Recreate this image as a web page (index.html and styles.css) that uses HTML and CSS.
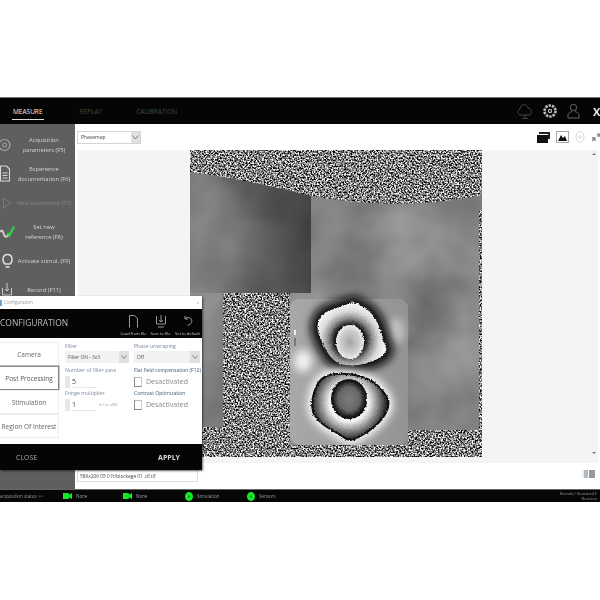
FILE: index.html
```html
<!DOCTYPE html>
<html>
<head>
    <title>Measure</title>
    <link rel="stylesheet" href="styles.css">
</head>
<body>
<div id="app">
    <div id="topbar">
        <div class="tab active">MEASURE</div>
        <div class="tab replay">REPLAY</div>
        <div class="tab calib">CALIBRATION</div>
        <div class="top-icons">
            <svg width="18" height="18" viewBox="0 0 18 18" fill="none" stroke="#444" stroke-width="1"><path d="M5 13 C1 13 1 8 4 7 C4 2 11 1 12 6 C16 6 17 13 13 13 Z"/><path d="M9 13 V16 M6 16.5 H12"/></svg>
            <svg width="16" height="16" viewBox="0 0 16 16" fill="none" stroke="#bbb"><circle cx="8" cy="8" r="5.5" stroke-width="2.6" stroke-dasharray="2.4 1"/><circle cx="8" cy="8" r="1.6" stroke-width="1.2"/></svg>
            <svg width="15" height="16" viewBox="0 0 15 16" fill="none" stroke="#666" stroke-width="1"><circle cx="7.5" cy="4.5" r="3.2"/><path d="M2 15 V12 C2 9.5 5 9 6 8.5 M13 15 V12 C13 9.5 10 9 9 8.5 M2 15 H13"/></svg>
            <span class="close-x">X</span>
        </div>
    </div>

    <div id="main">
        <div id="sidebar">
            <div class="side-item">
                <svg class="side-icon" width="14" height="16" viewBox="0 0 14 16" fill="none" stroke="#a8a8a8"><circle cx="4" cy="8" r="5.5" stroke-width="1.2"/><circle cx="4" cy="8" r="2" stroke-width="1"/></svg>
                <span>Acquisition<br>parameters (F5)</span>
            </div>
            <div class="side-item">
                <svg class="side-icon" width="14" height="18" viewBox="0 0 14 18" fill="none" stroke="#d8d8d8" stroke-width="1.1"><path d="M0 1 H6 L9 4 V16 H0 Z M2 8 H7 M2 10.5 H7 M2 13 H7"/></svg>
                <span>Experience<br>documentation (F6)</span>
            </div>
            <div class="side-item dim">
                <svg class="side-icon" width="12" height="14" viewBox="0 0 12 14" fill="none" stroke="#7a7a7a"><path d="M2 2 L9 7 L2 12 Z"/></svg>
                <span>New experience (F7)</span>
            </div>
            <div class="side-item">
                <svg class="side-icon" width="16" height="18" viewBox="0 0 16 18" fill="none"><path d="M0 9 C2 6 3 8 4 11 C5 15 7 15 9 12" stroke="#c9c9c9" stroke-width="2.2"/><path d="M8 10 L10 13 L15 3" stroke="#22e83c" stroke-width="2"/></svg>
                <span>Set new<br>reference (F8)</span>
            </div>
            <div class="side-item">
                <svg class="side-icon" width="12" height="16" viewBox="0 0 12 16" fill="none" stroke="#e0e0e0" stroke-width="1.4"><path d="M3.5 11 C0 8 1 1.5 6 1.5 C11 1.5 12 8 8.500 11 Z M4 14 H8"/></svg>
                <span>Activate stimul. (F9)</span>
            </div>
            <div class="side-item">
                <svg class="side-icon" width="12" height="15" viewBox="0 0 12 15" fill="none" stroke="#c8c8c8"><path d="M1 6 V13 H10 V6 M5.500 1 V9 M3.500 7 L5.500 9 L7.500 7"/></svg>
                <span>Record (F11)</span>
            </div>
        </div>

        <div id="content">
            <div id="toolbar">
                <div class="map-select">
                    <span>Phasemap</span>
                    <div class="map-arrow"><svg width="7" height="5" viewBox="0 0 7 5" fill="none" stroke="#777"><path d="M.5 .5 L3.500 4 L6.500 .5"/></svg></div>
                </div>
                <div class="tool-icons">
                    <svg width="13" height="11" viewBox="0 0 13 11"><path d="M2 0 H13 V7 H11 V2 H2 Z" fill="#222"/><rect x="0" y="3" width="11" height="8" fill="#111"/></svg>
                    <svg width="13" height="12" viewBox="0 0 13 12"><rect x=".5" y=".5" width="12" height="11" fill="#fff" stroke="#aaa"/><path d="M2 10 L5 4 L7 7 L9 5 L11 10 Z" fill="#111"/></svg>
                    <svg width="10" height="12" viewBox="0 0 10 12" fill="none" stroke="#d8d8d8"><ellipse cx="5" cy="6" rx="4" ry="5.200"/><circle cx="5" cy="6" r="1.300"/></svg>
                    <svg class="arrows" width="9" height="10" viewBox="0 0 9 10" fill="none" stroke="#888" stroke-width="1.300"><path d="M0 9 L3 6 M0 6 H3 V9 M9 1 L6 4 M6 1 V4 H9"/></svg>
                </div>
            </div>

            <div id="viewer">
                <svg class="phase" width="292" height="307" viewBox="0 0 292 307">
                    <defs>
                        <filter id="noise" x="0" y="0" width="100%" height="100%" color-interpolation-filters="sRGB">
                            <feTurbulence type="fractalNoise" baseFrequency=".62" numOctaves="2" seed="7"/>
                            <feColorMatrix values="2.600 0 0 0 -.8 2.600 0 0 0 -.8 2.600 0 0 0 -.8 0 0 0 0 1"/>
                            <feGaussianBlur stdDeviation=".5"/>
                        </filter>
                        <filter id="cloud" x="0" y="0" width="100%" height="100%" color-interpolation-filters="sRGB">
                            <feTurbulence type="fractalNoise" baseFrequency=".016" numOctaves="3" seed="3"/>
                            <feColorMatrix values=".28 0 0 0 .37 .28 0 0 0 .37 .28 0 0 0 .37 0 0 0 0 1"/>
                        </filter>
                        <filter id="rough" x="-10%" y="-10%" width="120%" height="120%">
                            <feTurbulence type="fractalNoise" baseFrequency=".6" numOctaves="2" seed="5"/>
                            <feDisplacementMap in="SourceGraphic" scale="3" xChannelSelector="R" yChannelSelector="G"/>
                            <feGaussianBlur stdDeviation=".4"/>
                        </filter>
                        <filter id="soft" x="-30%" y="-30%" width="160%" height="160%"><feGaussianBlur stdDeviation="4"/></filter>
                        <clipPath id="gray-area">
                            <path d="M0 22 Q60 30 121 46 Q210 62 292 45 V280 H218 V295 H33 V277 H0 Z"/>
                        </clipPath>
                        <linearGradient id="dark-fade" x1="0" x2="1" y1="0" y2="0">
                            <stop offset="0" stop-color="#333" stop-opacity=".05"/>
                            <stop offset=".5" stop-color="#222" stop-opacity=".35"/>
                            <stop offset="1" stop-color="#1a1a1a" stop-opacity=".6"/>
                        </linearGradient>
                        <radialGradient id="up-ring" gradientUnits="userSpaceOnUse" cx="160" cy="190" r="36">
                            <stop offset=".42" stop-color="#141414"/>
                            <stop offset=".6" stop-color="#8a8a8a"/>
                            <stop offset=".8" stop-color="#dadada"/>
                            <stop offset="1" stop-color="#f6f6f6"/>
                        </radialGradient>
                        <radialGradient id="up-dot"><stop offset="0" stop-color="#a5a5a5"/><stop offset=".7" stop-color="#cfcfcf"/><stop offset="1" stop-color="#f0f0f0"/></radialGradient>
                        <radialGradient id="low-ring" gradientUnits="userSpaceOnUse" cx="159" cy="252" r="41">
                            <stop offset=".48" stop-color="#f2f2f2"/>
                            <stop offset=".7" stop-color="#8a8a8a"/>
                            <stop offset=".9" stop-color="#2a2a2a"/>
                            <stop offset="1" stop-color="#0c0c0c"/>
                        </radialGradient>
                        <radialGradient id="low-dot"><stop offset="0" stop-color="#7c7c7c"/><stop offset=".6" stop-color="#666"/><stop offset=".88" stop-color="#1c1c1c"/><stop offset="1" stop-color="#050505"/></radialGradient>
                        <linearGradient id="win-fade" x1="0" x2="1" y1="0" y2="0">
                            <stop offset="0" stop-color="#a8a8a8"/>
                            <stop offset="1" stop-color="#939393"/>
                        </linearGradient>
                        <path id="up-shape" d="M156.500 154.500 Q163 150 171.500 156 Q180 160 185 168.500 Q190 177 191.500 183.500 Q193 190 195.500 196 Q198 202 192.500 206 Q187 210 175 213.500 Q163 217 153 214.500 Q143 212 137.500 202.500 Q132 193 129 185 Q126 177 129 170 Q132 163 141 160 Q150 157 156.500 154.500 Z"/>
                        <path id="low-shape" d="M146.500 224 Q160 223 171 226.500 Q182 230 188.500 236.500 Q195 243 197.500 249 Q200 255 196 262.500 Q192 270 184.500 276.500 Q177 283 168.500 287 Q160 293 153.500 287 Q147 283 138.500 278 Q130 273 125.500 266.500 Q121 260 122.500 250 Q124 240 128.500 232.500 Q133 225 146.500 224 Z"/>
                    </defs>

                    <rect width="292" height="307" filter="url(#noise)"/>
                    <g clip-path="url(#gray-area)">
                        <rect width="292" height="307" filter="url(#cloud)"/>
                        <rect x="0" y="0" width="121" height="143" fill="url(#dark-fade)"/>
                    </g>

                    <!-- noisy column left of the phase window -->
                    <rect x="33" y="143" width="67" height="155" filter="url(#noise)"/>
                    <rect x="100" y="149" width="118" height="146" rx="9" fill="url(#win-fade)"/>

                    <ellipse cx="113" cy="211" rx="9" ry="11" fill="#f4f4f4" filter="url(#soft)"/>
                    <ellipse cx="206" cy="181" rx="8" ry="13" fill="#c4c4c4" filter="url(#soft)"/>
                    <rect x="104" y="180" width="2" height="5" fill="#eee"/>
                    <rect x="104" y="188" width="2" height="8" fill="#777"/>

                    <use href="#up-shape" fill="#0c0c0c" stroke="#0c0c0c" stroke-width="14" stroke-linejoin="round" filter="url(#soft)"/>
                    <use href="#up-shape" fill="url(#up-ring)" filter="url(#rough)"/>
                    <ellipse cx="160" cy="192" rx="14" ry="17" fill="url(#up-dot)" filter="url(#rough)"/>

                    <use href="#low-shape" fill="#fff" stroke="#fff" stroke-width="9" stroke-linejoin="round" filter="url(#soft)"/>
                    <use href="#low-shape" fill="url(#low-ring)" stroke="#0c0c0c" stroke-width="2" stroke-linejoin="round" filter="url(#rough)"/>
                    <ellipse cx="159" cy="249" rx="18" ry="20" fill="url(#low-dot)" filter="url(#rough)"/>

                    <rect x="289" y="60" width="3" height="247" filter="url(#noise)"/>
                    <rect x="0" y="277" width="33" height="30" filter="url(#noise)"/>
                    <rect x="218" y="280" width="74" height="27" filter="url(#noise)"/>
                    <rect x="100" y="295" width="118" height="12" filter="url(#noise)" opacity=".55"/>
                </svg>
                <span class="scroll-up"></span>
                <span class="scroll-down"></span>
            </div>

            <div id="file-row">
                <div class="file-name">586x206 05 0 fr/blockage 01 .tif.tif</div>
                <div class="file-icons"><span class="mini one"></span><span class="mini two"></span></div>
            </div>
        </div>
    </div>

    <div id="status">
        <span class="status-text">acquisition status &gt;&gt;</span>
        <span class="stat cam first"><i class="cam-ico"></i>None</span>
        <span class="stat cam"><i class="cam-ico"></i>None</span>
        <span class="stat sim"><i class="dot-ico"></i>Simulation</span>
        <span class="stat"><i class="dot-ico"></i>Sensors</span>
        <span class="status-right">Brands / Standard F<br>Revision</span>
    </div>

    <div id="dialog">
        <div class="dlg-title">
            <span><i class="dlg-logo"></i>Configuration</span>
            <span>×</span>
        </div>
        <div class="dlg-head">
            <div class="dlg-name">CONFIGURATION</div>
            <div class="dlg-tool">
                <svg width="9" height="13" viewBox="0 0 9 13" fill="none" stroke="#999"><path d="M.5 .5 H5.500 L8.500 3.500 V12.500"/><path d="M.5 .5 V12.500"/></svg>
                <span>Load from file</span>
            </div>
            <div class="dlg-tool">
                <svg width="10" height="13" viewBox="0 0 10 13" fill="none" stroke="#999"><path d="M.5 1 V9 H9.500 V1 M5 0 V7 M3 5 L5 7 L7 5 M2 12 H8"/></svg>
                <span>Save to file</span>
            </div>
            <div class="dlg-tool">
                <svg width="11" height="13" viewBox="0 0 11 13" fill="none" stroke="#999"><path d="M3 3.500 C7 1 11 4 9.500 7.500 C9 9 7 10 5.500 10.500 M3 1 V4 H6"/></svg>
                <span>Set to default</span>
            </div>
        </div>
        <div class="dlg-body">
            <div class="dlg-tabs">
                <div class="dlg-tab">Camera</div>
                <div class="dlg-tab on">Post Processing</div>
                <div class="dlg-tab">Stimulation</div>
                <div class="dlg-tab">Region Of Interest</div>
            </div>
            <div class="dlg-form">
                <div class="dlg-col">
                    <label class="lab">Filter</label>
                    <div class="combo"><span>Filter ON - 3x3</span><b><svg width="6" height="4" viewBox="0 0 6 4" fill="none" stroke="#888"><path d="M.5 .5 L3 3.500 L5.500 .5"/></svg></b></div>
                    <label class="lab">Number of filter pass</label>
                    <div class="spin"><i></i><span>5</span></div>
                    <label class="lab">Fringe multiplier</label>
                    <div class="spin"><i></i><span>1</span><em>(x1 to x99)</em></div>
                </div>
                <div class="dlg-col">
                    <label class="lab">Phase unwraping</label>
                    <div class="combo"><span>Off</span><b><svg width="6" height="4" viewBox="0 0 6 4" fill="none" stroke="#888"><path d="M.5 .5 L3 3.500 L5.500 .5"/></svg></b></div>
                    <label class="lab strong">Flat field compensation (F12)</label>
                    <div class="check"><i></i>Desactivated</div>
                    <label class="lab strong">Contrast Optimization</label>
                    <div class="check"><i></i>Desactivated</div>
                </div>
            </div>
        </div>
        <div class="dlg-foot">
            <span class="close-btn">CLOSE</span>
            <span class="apply-btn">APPLY</span>
        </div>
    </div>
</div>
</body>
</html>
```

FILE: styles.css
```css
* {
    margin: 0;
    padding: 0;
    box-sizing: border-box;
}

body {
    background-color: #fff;
    padding-top: 97px;
    font-family: "Open Sans", "Liberation Sans", sans-serif;
}

#app {
    position: relative;
    width: 600px;
    height: 405px;
    overflow: hidden;
    filter: blur(.55px);
}

/* top bar */
#topbar {
    display: flex;
    align-items: center;
    height: 27px;
    background-color: #050505;
    border-top: 1px solid #777;
    padding-left: 12px;
    color: #484848;
    font-size: 6.500px;
}

.tab.active {
    color: #eee;
    border-bottom: 1px solid #ddd;
    padding: 3px 1px 3px;
    margin-top: 1px;
}

.replay {
    margin-left: 36px;
}

.calib {
    margin-left: 34px;
}

.top-icons {
    display: flex;
    align-items: center;
    gap: 8px;
    margin-left: auto;
    margin-right: -1px;
}

.close-x {
    margin-left: 4px;
    width: 8px;
    color: #eee;
    font-size: 11px;
    font-weight: 700;
}

#main {
    display: flex;
    height: 365px;
}

/* left menu */
#sidebar {
    width: 75px;
    flex: none;
    padding-top: 6px;
    background-color: #5f5f5f;
}

.side-item {
    display: flex;
    align-items: center;
    height: 29px;
    color: #d4d4d4;
    font-size: 5.800px;
    line-height: 10px;
    text-align: center;
}

.side-item span {
    flex: 1;
    white-space: nowrap;
    margin-left: -2px;
}

.side-item.dim {
    color: #858585;
}

.side-icon {
    flex: none;
    width: 15px;
}

/* viewer */
#content {
    flex: 1;
    display: flex;
    flex-direction: column;
    min-width: 0;
    background-color: #fff;
}

#toolbar {
    display: flex;
    align-items: center;
    height: 26px;
    padding: 0 0 0 2px;
}

.map-select {
    display: flex;
    align-items: center;
    justify-content: space-between;
    width: 64px;
    height: 13px;
    border: 1px solid #d4d4d4;
    padding-left: 3px;
    color: #444;
    font-size: 5px;
}

.map-arrow {
    display: flex;
    align-items: center;
    justify-content: center;
    width: 9px;
    height: 100%;
    background-color: #e2e2e2;
}

.tool-icons {
    display: flex;
    align-items: center;
    gap: 6px;
    margin-left: auto;
    margin-right: -1px;
}

.arrows {
    margin-left: 1px;
}

#viewer {
    position: relative;
    height: 313px;
    padding-left: 112px;
    margin-left: 3px;
    margin-right: 2px;
    background-color: #f4f4f4;
}

.phase {
    display: block;
}

.scroll-up,
.scroll-down {
    position: absolute;
    right: 2px;
    width: 0;
    height: 0;
    border: 2px solid transparent;
}

.scroll-up {
    top: 1px;
    border-bottom-color: #777;
}

.scroll-down {
    bottom: 7px;
    border-top-color: #777;
}

#file-row {
    display: flex;
    align-items: center;
    height: 26px;
    padding: 0 4px 4px 2px;
}

.file-name {
    width: 121px;
    height: 12px;
    margin-top: 3px;
    padding-left: 2px;
    border: 1px solid #ddd;
    color: #444;
    font-size: 4.800px;
    line-height: 10px;
    white-space: nowrap;
}

.file-icons {
    display: flex;
    gap: 1px;
    margin-left: auto;
    margin-right: 1px;
}

.mini {
    width: 6px;
    height: 8px;
    background-color: #c9c9c9;
}

.mini.one {
    background-color: #aebbc6;
    border-left: 2px solid #eee;
}

.mini.two {
    background-color: #999;
}

/* status bar */
#status {
    display: flex;
    align-items: center;
    height: 13px;
    background-color: #060606;
    border-top: 1px solid #666;
    color: #999;
    font-size: 4.500px;
    white-space: nowrap;
}

.status-text {
    width: 63px;
    flex: none;
}

.stat {
    display: flex;
    align-items: center;
    gap: 4px;
    width: 62px;
    flex: none;
}

.stat.first {
    width: 60px;
}

.cam-ico {
    width: 9px;
    height: 6px;
    background-color: #19e62b;
    clip-path: polygon(0 0, 65% 0, 65% 30%, 100% 0, 100% 100%, 65% 70%, 65% 100%, 0 100%);
}

.dot-ico {
    width: 8px;
    height: 9px;
    border-radius: 50%;
    background-color: #19e62b;
    border: 3px solid #19e62b;
    box-shadow: inset 0 0 0 1px #0a7f18;
}

.status-right {
    margin-left: auto;
    margin-right: 3px;
    text-align: right;
    line-height: 5px;
    font-size: 4px;
}

/* configuration window */
#dialog {
    position: absolute;
    left: 0;
    top: 199px;
    width: 202px;
    height: 174px;
    background-color: #fff;
    box-shadow: 1px 1px 2px rgba(0, 0, 0, .55);
}

.dlg-title {
    display: flex;
    justify-content: space-between;
    align-items: center;
    height: 13px;
    padding: 0 3px 0 0;
    color: #999;
    font-size: 4.500px;
}

.dlg-logo {
    display: inline-block;
    width: 2px;
    height: 6px;
    margin-right: 2px;
    vertical-align: middle;
    background-color: #6da2cf;
}

.dlg-head {
    display: flex;
    align-items: flex-end;
    height: 29px;
    padding: 0 1px 2px 0;
    background-color: #050505;
    color: #ccc;
}

.dlg-name {
    align-self: center;
    flex: 1;
    font-size: 8.500px;
    color: #bbb;
}

.dlg-tool {
    display: flex;
    flex-direction: column;
    align-items: center;
    gap: 3px;
    width: 27px;
    font-size: 4px;
    white-space: nowrap;
}

.dlg-body {
    display: flex;
    height: 106px;
    padding-top: 4px;
}

.dlg-tabs {
    width: 59px;
    flex: none;
}

.dlg-tab {
    display: flex;
    align-items: center;
    justify-content: center;
    height: 24px;
    border: 1px solid #eee;
    border-left: none;
    color: #666;
    font-size: 6.500px;
    white-space: nowrap;
}

.dlg-tab.on {
    border: 1px solid #888;
    border-left: none;
    color: #555;
    box-shadow: 0 0 0 .5px #888;
}

.dlg-form {
    display: flex;
    gap: 5px;
    padding-left: 6px;
}

.dlg-col {
    display: flex;
    flex-direction: column;
    width: 64px;
}

.dlg-col + .dlg-col {
    width: 66px;
}

.lab {
    display: block;
    height: 9px;
    color: #7b8ba0;
    font-size: 5.200px;
    line-height: 9px;
    white-space: nowrap;
}

.lab.strong {
    color: #3f5878;
    font-size: 5px;
}

.combo {
    display: flex;
    align-items: center;
    justify-content: space-between;
    height: 12px;
    margin-bottom: 3px;
    padding-left: 3px;
    background-color: #f2f2f2;
    color: #555;
    font-size: 4.800px;
}

.combo b {
    display: flex;
    align-items: center;
    justify-content: center;
    width: 10px;
    height: 100%;
    background-color: #e0e0e0;
}

.spin {
    display: flex;
    align-items: center;
    gap: 2px;
    height: 13px;
    margin-bottom: 1px;
    color: #444;
    font-size: 7px;
}

.spin i {
    width: 5px;
    height: 12px;
    background-color: #e6e6e6;
}

.spin span {
    width: 24px;
    height: 13px;
    line-height: 13px;
    border-bottom: 1px solid #e5e5e5;
}

.spin em {
    margin-left: 1px;
    color: #999;
    font-size: 3.800px;
    font-style: normal;
    white-space: nowrap;
}

.check {
    display: flex;
    align-items: center;
    gap: 4px;
    height: 13px;
    margin-bottom: 1px;
    color: #888;
    font-size: 7px;
}

.check i {
    width: 8px;
    height: 10px;
    border: 1px solid #888;
    border-right-color: #ccc;
    border-top-color: #bbb;
}

.dlg-foot {
    display: flex;
    align-items: center;
    justify-content: space-between;
    height: 26px;
    padding: 0 22px 0 16px;
    background-color: #050505;
    color: #aaa;
    font-size: 7px;
}

.apply-btn {
    color: #ddd;
    font-weight: 700;
}
```
